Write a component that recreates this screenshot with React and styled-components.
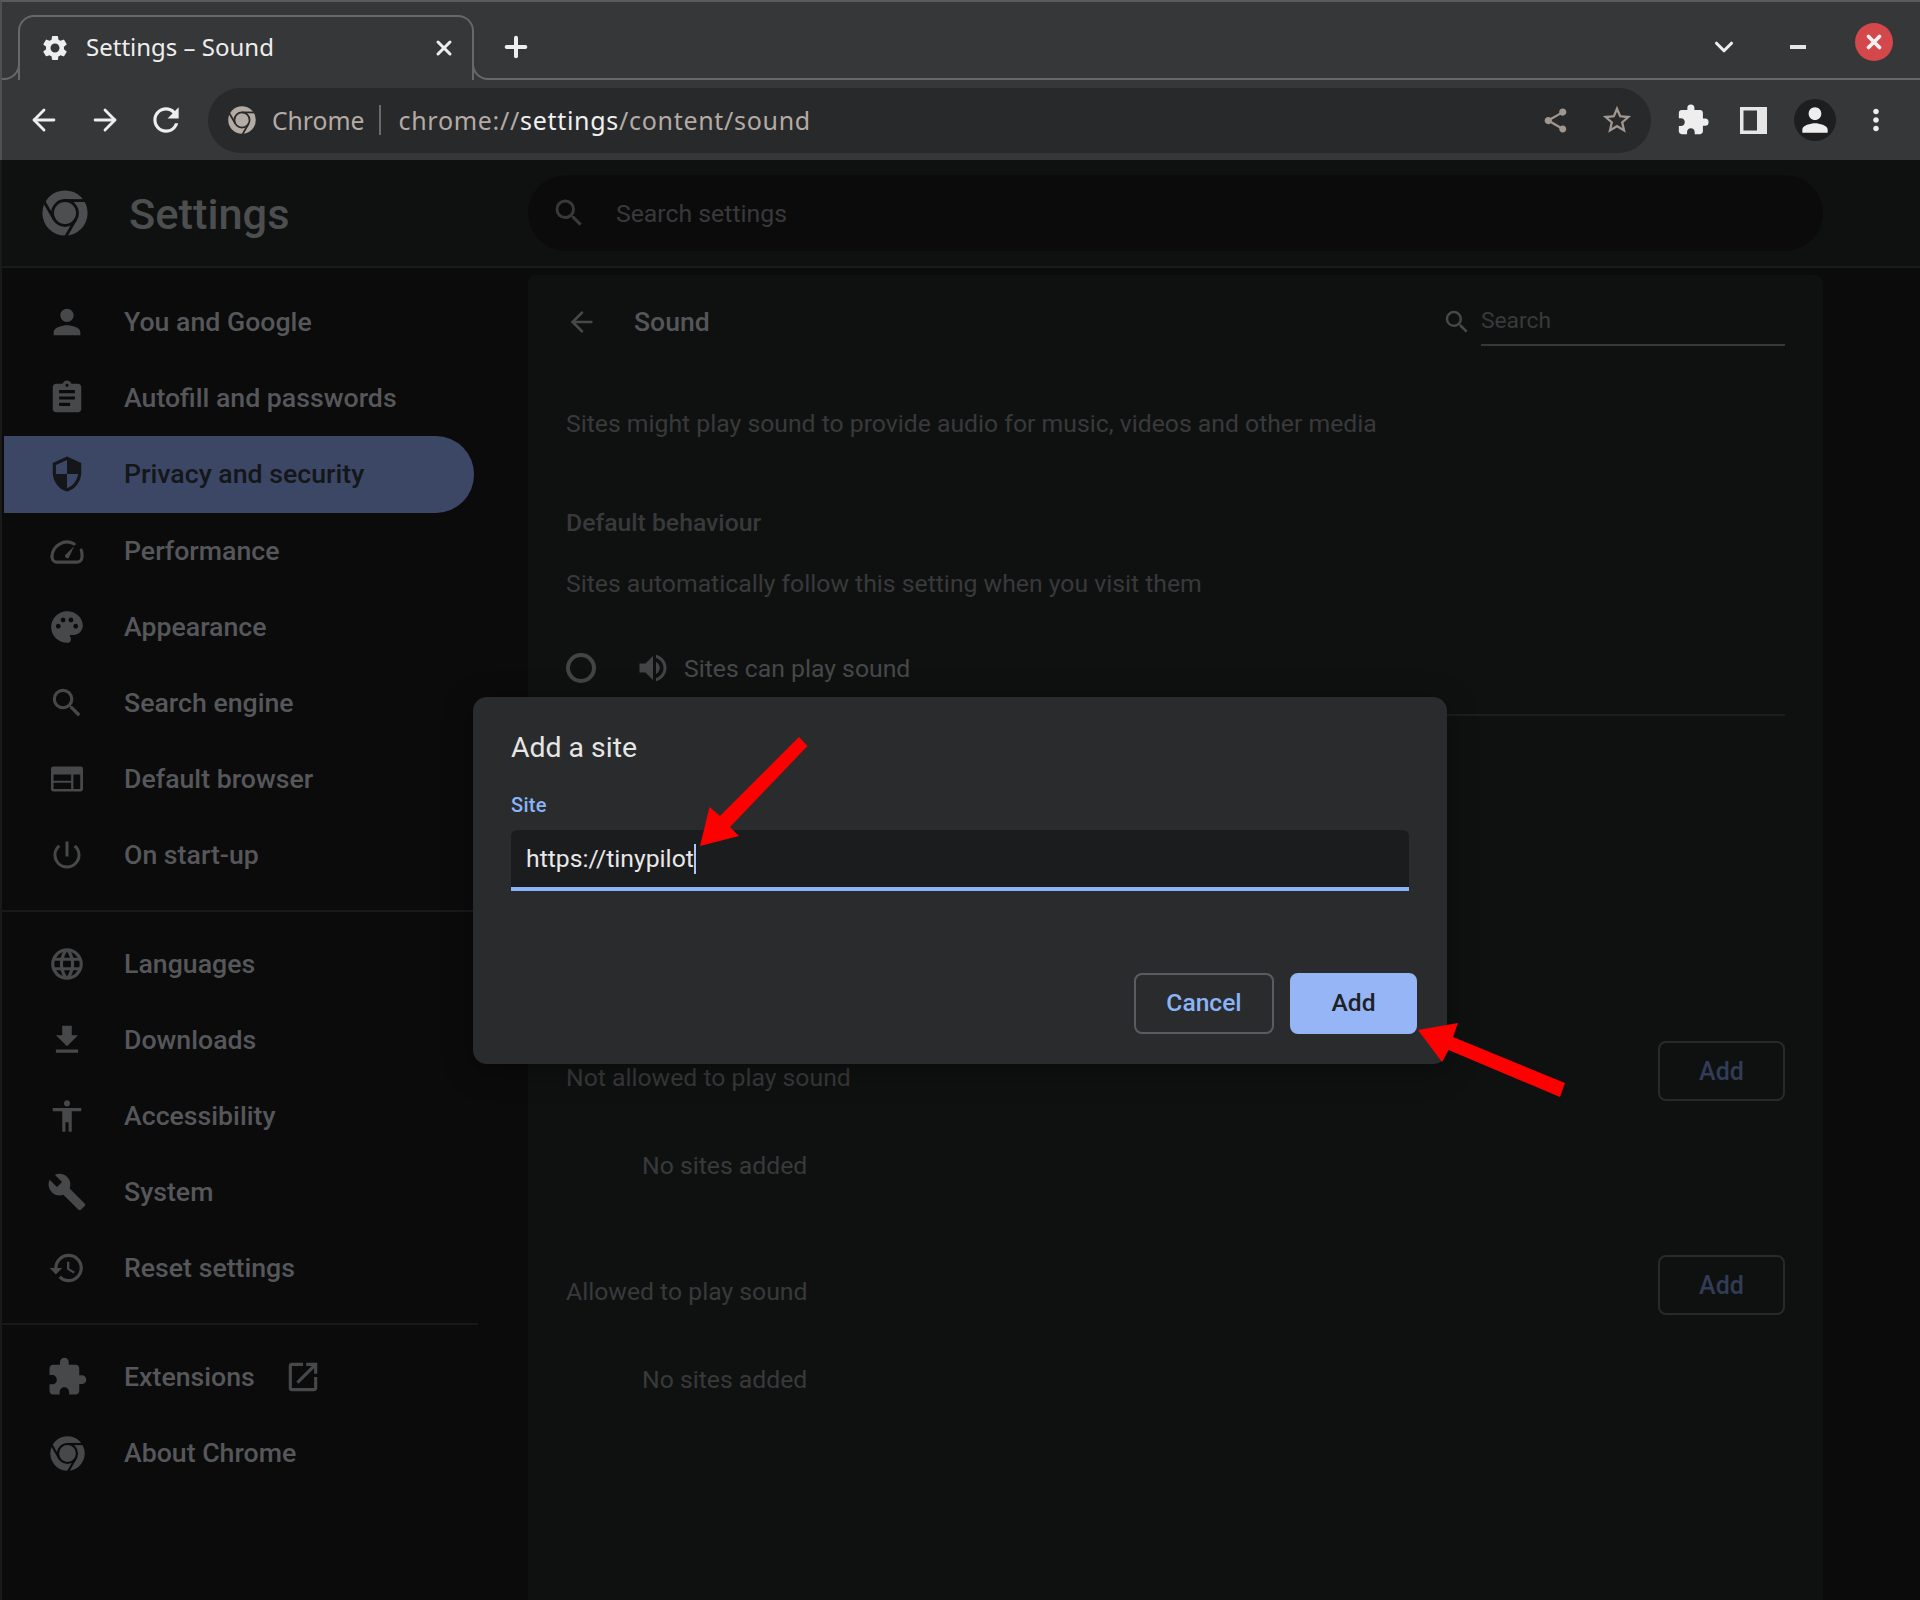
import React from "react";
import styled, { createGlobalStyle } from "styled-components";
import {
  MdSettings, MdRefresh, MdShare, MdStarBorder, MdExtension, MdMoreVert, MdPerson, MdAssignment, MdSecurity,
  MdPalette, MdSearch, MdPowerSettingsNew, MdLanguage, MdFileDownload, MdAccessibility, MdBuild, MdRestore,
  MdOpenInNew, MdVolumeUp,
} from "react-icons/md";
import { ArrowLeft, ArrowRight, X, Plus, ChevronDown } from "lucide-react";

const Global = createGlobalStyle`
  html, body { margin: 0; padding: 0; background: #0b0b0c; }
  * { box-sizing: border-box; }
  body { font-family: Roboto, "Liberation Sans", sans-serif; }
`;

const Page = styled.div`
  position: relative;
  width: 1920px;
  height: 1600px;
  overflow: hidden;
  background: #0b0b0c;
`;

const BrowserChrome = styled.div`
  background: #363738;
  border-top: 2px solid #5a5b5d;
  border-left: 2px solid #4f5052;
  font-family: "Noto Sans", sans-serif;
`;

const TitleBar = styled.div`
  display: flex;
  height: 78px;
  padding-left: 16px;
  align-items: flex-end;
`;

const Tab = styled.div`
  position: relative;
  display: flex;
  align-items: center;
  flex: none;
  width: 456px;
  height: 65px;
  padding: 0 16px 2px 20px;
  border: 2px solid #67686a;
  border-bottom: 0;
  border-radius: 16px 16px 0 0;
  background: #363738;
  color: #eeeeee;
  &::before, &::after {
    content: "";
    position: absolute;
    bottom: 0;
    width: 16px;
    height: 16px;
    border-bottom: 2px solid #67686a;
  }
  &::before {
    left: -18px;
    border-right: 2px solid #67686a;
    border-bottom-right-radius: 16px;
  }
  &::after {
    right: -18px;
    border-left: 2px solid #67686a;
    border-bottom-left-radius: 16px;
  }
`;

const TabTitle = styled.span`
  flex: 1;
  margin: -3px 0 0 16px;
  font-size: 24px;
  white-space: nowrap;
`;

const TitleRest = styled.div`
  flex: 1;
  display: flex;
  align-items: center;
  align-self: stretch;
  margin-left: 16px;
  padding: 14px 27px 0 0;
  border-bottom: 2px solid #67686a;
  color: #eeeeee;
`;

const StripSlot = styled.div`
  display: flex;
  align-items: center;
  justify-content: center;
  width: 52px;
  flex: none;
  margin-left: ${(p) => p.$gap || 0}px;
`;

const Spacer = styled.div`
  flex: 1;
`;

const MinimizeBar = styled.div`
  width: 16px;
  height: 4px;
  background: #e6e6e6;
`;

const CloseDot = styled.div`
  display: flex;
  align-items: center;
  justify-content: center;
  width: 38px;
  height: 38px;
  margin: -10px 0 0 31px;
  border-radius: 50%;
  background: #d4474b;
  color: #f2f2f2;
`;

const Toolbar = styled.div`
  display: flex;
  align-items: center;
  height: 80px;
  padding: 0 14px 0 11px;
  color: #eeeeee;
`;

const ToolSlot = styled.div`
  display: flex;
  align-items: center;
  justify-content: center;
  flex: none;
  width: 61px;
  height: 61px;
  color: ${(p) => p.$color || "inherit"};
`;

const Omnibox = styled.div`
  flex: 1;
  display: flex;
  align-items: center;
  height: 65px;
  margin: 0 11px 0 12px;
  padding: 0 4px 0 20px;
  border-radius: 33px;
  background: #28292b;
  color: #b4aba4;
`;

const ChipLabel = styled.span`
  margin-left: 16px;
  font-size: 24.7px;
`;

const OmniDivider = styled.div`
  width: 2px;
  height: 30px;
  margin: 0 18px 0 14px;
  background: #6b6a68;
`;

const Url = styled.span`
  flex: 1;
  font-size: 25px;
  letter-spacing: 0.7px;
  white-space: nowrap;
`;

const UrlHost = styled.span`
  color: #f0f0f0;
`;

const Avatar = styled.div`
  display: flex;
  align-items: center;
  justify-content: center;
  width: 42px;
  height: 42px;
  border-radius: 50%;
  background: #1d1e20;
`;

const SettingsHeader = styled.header`
  display: flex;
  align-items: center;
  height: 108px;
  padding-left: 40px;
  border-left: 2px solid #1a1a1b;
  border-bottom: 2px solid #191a1a;
  background: #0f1111;
`;

const HeaderBrand = styled.div`
  display: flex;
  align-items: center;
  width: 486px;
  flex: none;
  color: #4d4e50;
`;

const HeaderTitle = styled.h1`
  margin: 2px 0 0 41px;
  font-size: 43.4px;
  font-weight: 500;
  color: #4d4e50;
`;

const SearchBox = styled.div`
  display: flex;
  align-items: center;
  width: 1295px;
  height: 76px;
  padding-left: 23px;
  border-radius: 38px;
  background: #0b0b0c;
  color: #39393b;
  font-size: 24.8px;
  gap: 29px;
`;

const Body = styled.div`
  display: flex;
  height: 1332px;
  border-left: 2px solid #1a1a1b;
`;

const Sidebar = styled.nav`
  width: 526px;
  flex: none;
  padding-top: 16px;
`;

const NavRow = styled.div`
  display: flex;
  align-items: center;
  width: 470px;
  height: 76.2px;
  margin-left: 2px;
  padding-left: 33px;
  border-radius: 0 38px 38px 0;
  background: ${(p) => (p.$active ? "#3b4764" : "transparent")};
  color: ${(p) => (p.$active ? "#14161a" : "#56575a")};
  font-size: 26.7px;
  font-weight: 500;
`;

const NavIcon = styled.span`
  display: flex;
  align-items: center;
  justify-content: center;
  flex: none;
  width: 60px;
  margin-right: 27px;
  color: ${(p) => (p.$active ? "#14161a" : "#47484a")};
`;

const ExternalIcon = styled.span`
  display: flex;
  margin-left: 29px;
  color: #47484a;
`;

const NavDivider = styled.div`
  width: 476px;
  height: 2px;
  margin: ${(p) => p.$top}px 0 ${(p) => p.$bottom}px;
  background: #18191a;
`;

const Card = styled.main`
  width: 1295px;
  margin-top: 7px;
  padding: 0 38px;
  border-radius: 8px 8px 0 0;
  background: #0f1111;
  color: #39393b;
  font-size: 24.75px;
`;

const CardHeader = styled.div`
  display: flex;
  align-items: center;
  height: 92px;
  padding-top: 2px;
`;

const BackSlot = styled.span`
  display: flex;
  width: 68px;
  color: #47484a;
`;

const CardTitle = styled.h2`
  flex: 1;
  margin: 0 0 2px;
  font-size: 26.6px;
  font-weight: 500;
  color: #55565a;
`;

const CardSearch = styled.div`
  display: flex;
  align-items: center;
  width: 343px;
  color: #47484a;
`;

const CardSearchField = styled.div`
  flex: 1;
  height: 48px;
  margin-left: 9px;
  border-bottom: 2px solid #37383a;
  color: #39393b;
  font-size: 22.8px;
  line-height: 46px;
`;

const TextLine = styled.div`
  height: 40px;
  margin-top: ${(p) => p.$top}px;
  margin-left: ${(p) => p.$left || 0}px;
  line-height: 40px;
  font-weight: ${(p) => (p.$strong ? 500 : 400)};
  white-space: nowrap;
`;

const RadioRow = styled.div`
  display: flex;
  align-items: center;
  height: 94px;
  margin-top: 18px;
  border-bottom: 2px solid #1c1d1e;
  color: #47484a;
`;

const Radio = styled.span`
  flex: none;
  width: 30px;
  height: 30px;
  margin-right: 39px;
  border: 4px solid #434446;
  border-radius: 50%;
`;

const SoundIcon = styled.span`
  display: flex;
  margin-right: 13px;
  color: #434446;
`;

const ListHeader = styled.div`
  display: flex;
  align-items: center;
  justify-content: space-between;
  margin-top: ${(p) => p.$top}px;
`;

const ListTitle = styled.span`
  padding-top: ${(p) => p.$shift}px;
`;

const GhostButton = styled.div`
  display: flex;
  align-items: center;
  justify-content: center;
  width: 127px;
  height: 60px;
  border: 2px solid #28292b;
  border-radius: 8px;
  color: #323c56;
  font-size: 25px;
  font-weight: 500;
`;

const Dialog = styled.section`
  position: absolute;
  left: 473px;
  top: 697px;
  width: 974px;
  height: 367px;
  padding: 31px 30px 0 38px;
  border-radius: 14px;
  background: #2a2b2d;
  box-shadow: 0 6px 30px rgba(0, 0, 0, 0.35);
`;

const DialogTitle = styled.h3`
  margin: 0;
  font-size: 28.4px;
  line-height: 40px;
  font-weight: 400;
  color: #e6e6e6;
`;

const FieldLabel = styled.label`
  display: block;
  margin-top: 25px;
  font-size: 20px;
  line-height: 24px;
  font-weight: 500;
  letter-spacing: 0.3px;
  color: #8ab4f8;
`;

const Field = styled.div`
  display: flex;
  align-items: center;
  width: 898px;
  height: 61px;
  margin-top: 13px;
  padding: 0 15px;
  border-bottom: 4px solid #8ab4f8;
  border-radius: 6px 6px 0 0;
  background: #1b1c1e;
  color: #e8e8e8;
  font-size: 24.75px;
`;

const Caret = styled.span`
  width: 2px;
  height: 30px;
  background: #a8c7fa;
`;

const DialogActions = styled.div`
  display: flex;
  justify-content: flex-end;
  gap: 16px;
  margin-top: 82px;
`;

const DialogButton = styled.div`
  display: flex;
  align-items: center;
  justify-content: center;
  width: ${(p) => (p.$primary ? 127 : 140)}px;
  height: 61px;
  padding-bottom: 2px;
  border: 2px solid ${(p) => (p.$primary ? "#95b5f6" : "#5b5c60")};
  border-radius: 8px;
  background: ${(p) => (p.$primary ? "#95b5f6" : "transparent")};
  color: ${(p) => (p.$primary ? "#202124" : "#8ab4f8")};
  font-size: 24.6px;
  font-weight: 500;
`;

const Annotation = styled.svg`
  position: absolute;
  left: 0;
  top: 0;
  pointer-events: none;
`;

const ChromeLogo = ({ size }) => (
  <svg width={size} height={size} viewBox="0 0 24 24">
    <mask id="chrome-cut" maskUnits="userSpaceOnUse" x="0" y="0" width="24" height="24">
      <rect width="24" height="24" fill="#fff" />
      <circle cx="12" cy="12" r="6.500" fill="none" stroke="#000" strokeWidth="1.500" />
      <g stroke="#000" strokeWidth="1.500">
        <line x1="12" y1="5.500" x2="26" y2="5.500" />
        <line x1="12" y1="5.500" x2="26" y2="5.500" transform="rotate(120 12 12)" />
        <line x1="12" y1="5.500" x2="26" y2="5.500" transform="rotate(240 12 12)" />
      </g>
    </mask>
    <circle cx="12" cy="12" r="11.800" fill="currentColor" mask="url(#chrome-cut)" />
  </svg>
);

const Gauge = ({ size }) => (
  <svg width={size} height={size} viewBox="0 0 24 24" fill="none" stroke="currentColor" strokeWidth="2" strokeLinecap="round">
    <path d="M2.5 15.5a9.5 9.5 0 0 1 14-8" />
    <path d="M21 11.5c.6 1.300.5 2.600.5 4 0 1.600-1 3.500-3 3.500H5.500c-2 0-3-1.900-3-3.500" />
    <path d="M10.700 14.700 16.500 9l-3.300 7.300a1.600 1.600 0 0 1-2.500-1.600z" fill="currentColor" stroke="none" />
  </svg>
);

const BrowserFrame = ({ size }) => (
  <svg width={size} height={size} viewBox="0 0 31 24" fill="currentColor">
    <path
      fillRule="evenodd"
      d="M2 0h27a2 2 0 0 1 2 2v20a2 2 0 0 1-2 2H2a2 2 0 0 1-2-2V2a2 2 0 0 1 2-2zM2.500 7.700v6h17v-6zm0 8v6h17v-6zm19.200-8v14h6.600v-14z"
    />
  </svg>
);

const SidePanel = () => (
  <svg width="27" height="27" viewBox="0 0 27 27" fill="#e6e6e6">
    <path fillRule="evenodd" d="M0 0h27v27H0zM3.500 3.500v20H17v-20z" />
  </svg>
);

const group1 = [
  ["You and Google", MdPerson, 40],
  ["Autofill and passwords", MdAssignment, 38],
  ["Privacy and security", MdSecurity, 38, true],
  ["Performance", Gauge, 38],
  ["Appearance", MdPalette, 38],
  ["Search engine", MdSearch, 38],
  ["Default browser", BrowserFrame, 32],
  ["On start-up", MdPowerSettingsNew, 36],
];

const group2 = [
  ["Languages", MdLanguage, 38],
  ["Downloads", MdFileDownload, 38],
  ["Accessibility", MdAccessibility, 38],
  ["System", MdBuild, 40],
  ["Reset settings", MdRestore, 38],
];

const NavItem = ({ label, Icon, size, active, children }) => (
  <NavRow $active={active}>
    <NavIcon $active={active}>
      <Icon size={size} />
    </NavIcon>
    {label}
    {children}
  </NavRow>
);

export default function App() {
  return (
    <Page>
      <Global />
      <BrowserChrome>
        <TitleBar>
          <Tab>
            <MdSettings size={30} />
            <TabTitle>Settings – Sound</TabTitle>
            <X size={24} strokeWidth={3} />
          </Tab>
          <TitleRest>
            <StripSlot>
              <Plus size={32} strokeWidth={3} />
            </StripSlot>
            <Spacer />
            <StripSlot>
              <ChevronDown size={30} strokeWidth={2.5} />
            </StripSlot>
            <StripSlot $gap={22}>
              <MinimizeBar />
            </StripSlot>
            <CloseDot>
              <X size={22} strokeWidth={4} />
            </CloseDot>
          </TitleRest>
        </TitleBar>
        <Toolbar>
          <ToolSlot><ArrowLeft size={34} strokeWidth={2} /></ToolSlot>
          <ToolSlot><ArrowRight size={34} strokeWidth={2} /></ToolSlot>
          <ToolSlot><MdRefresh size={38} /></ToolSlot>
          <Omnibox>
            <ChromeLogo size={28} />
            <ChipLabel>Chrome</ChipLabel>
            <OmniDivider />
            <Url>
              chrome://<UrlHost>settings</UrlHost>/content/sound
            </Url>
            <ToolSlot $color="#a2978f"><MdShare size={29} /></ToolSlot>
            <ToolSlot $color="#a2978f"><MdStarBorder size={34} /></ToolSlot>
          </Omnibox>
          <ToolSlot><MdExtension size={34} /></ToolSlot>
          <ToolSlot><SidePanel /></ToolSlot>
          <ToolSlot>
            <Avatar><MdPerson size={38} /></Avatar>
          </ToolSlot>
          <ToolSlot><MdMoreVert size={34} /></ToolSlot>
        </Toolbar>
      </BrowserChrome>

      <SettingsHeader>
        <HeaderBrand>
          <ChromeLogo size={46} />
          <HeaderTitle>Settings</HeaderTitle>
        </HeaderBrand>
        <SearchBox>
          <MdSearch size={36} />
          Search settings
        </SearchBox>
      </SettingsHeader>

      <Body>
        <Sidebar>
          {group1.map(([label, Icon, size, active]) => (
            <NavItem key={label} label={label} Icon={Icon} size={size} active={active} />
          ))}
          <NavDivider $top={16} $bottom={14} />
          {group2.map(([label, Icon, size]) => (
            <NavItem key={label} label={label} Icon={Icon} size={size} />
          ))}
          <NavDivider $top={17} $bottom={13.5} />
          <NavItem label="Extensions" Icon={MdExtension} size={42}>
            <ExternalIcon><MdOpenInNew size={38} /></ExternalIcon>
          </NavItem>
          <NavItem label="About Chrome" Icon={ChromeLogo} size={35} />
        </Sidebar>

        <Card>
          <CardHeader>
            <BackSlot><ArrowLeft size={32} strokeWidth={2} /></BackSlot>
            <CardTitle>Sound</CardTitle>
            <CardSearch>
              <MdSearch size={30} />
              <CardSearchField>Search</CardSearchField>
            </CardSearch>
          </CardHeader>
          <TextLine $top={37}>Sites might play sound to provide audio for music, videos and other media</TextLine>
          <TextLine $top={59} $strong>Default behaviour</TextLine>
          <TextLine $top={21}>Sites automatically follow this setting when you visit them</TextLine>
          <RadioRow>
            <Radio />
            <SoundIcon><MdVolumeUp size={36} /></SoundIcon>
            Sites can play sound
          </RadioRow>
          <ListHeader $top={325}>
            <ListTitle $shift={13}>Not allowed to play sound</ListTitle>
            <GhostButton>Add</GhostButton>
          </ListHeader>
          <TextLine $top={45} $left={76}>No sites added</TextLine>
          <ListHeader $top={69}>
            <ListTitle $shift={13}>Allowed to play sound</ListTitle>
            <GhostButton>Add</GhostButton>
          </ListHeader>
          <TextLine $top={45} $left={76}>No sites added</TextLine>
        </Card>
      </Body>

      <Dialog>
        <DialogTitle>Add a site</DialogTitle>
        <FieldLabel>Site</FieldLabel>
        <Field>
          https://tinypilot
          <Caret />
        </Field>
        <DialogActions>
          <DialogButton>Cancel</DialogButton>
          <DialogButton $primary>Add</DialogButton>
        </DialogActions>
      </Dialog>

      <Annotation width="1920" height="1600" viewBox="0 0 1920 1600">
        <polygon fill="#ff0000" points="799,737 807.500,746 730,827 739,836 700,846 709.500,807 720,816" />
        <polygon fill="#ff0000" points="1418,1030 1458,1023 1453,1037 1565,1083 1560,1097 1448.600,1050 1442,1062" />
      </Annotation>
    </Page>
  );
}
